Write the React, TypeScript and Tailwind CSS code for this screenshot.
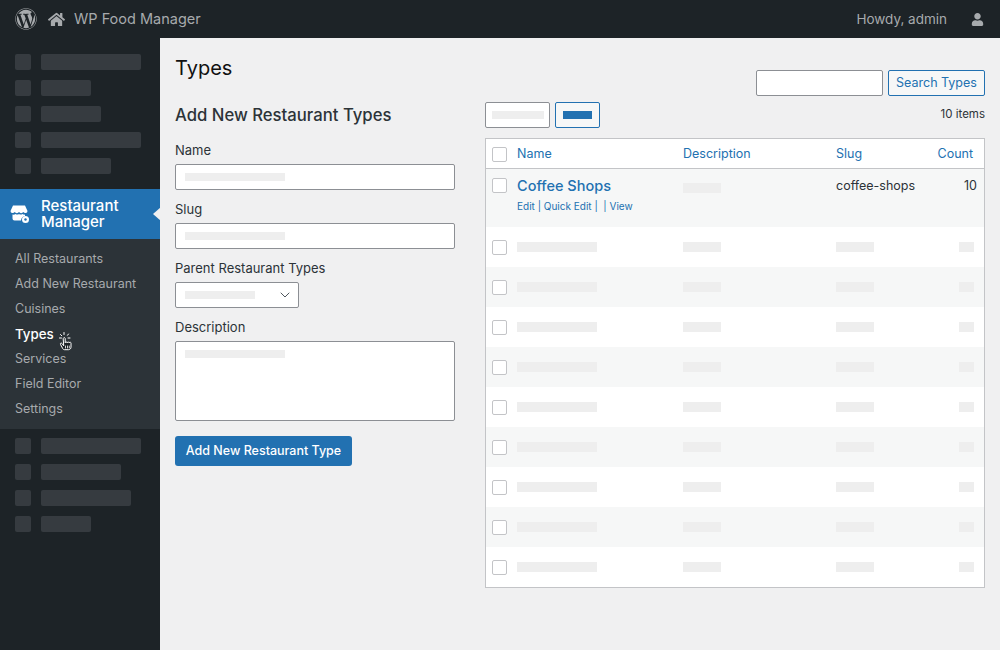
import React from "react";
import { FaWordpress, FaHome, FaUser } from "react-icons/fa";
import { ChevronDown } from "lucide-react";

const topBars = [100, 50, 60, 100, 70];
const bottomBars = [100, 80, 90, 50];
const subItems = ["All Restaurants", "Add New Restaurant", "Cuisines", "Types", "Services", "Field Editor", "Settings"];
const emptyRows = [0, 1, 2, 3, 4, 5, 6, 7, 8];

const SkeletonMenu = ({ bars }: { bars: number[] }) => (
  <div className="flex flex-col gap-[10px] pl-[15px]">
    {bars.map((w, i) => (
      <div key={i} className="flex gap-[10px]">
        <div className="h-4 w-4 rounded-[2px] bg-[#363b40]" />
        <div className="h-4 rounded-[2px] bg-[#363b40]" style={{ width: w }} />
      </div>
    ))}
  </div>
);

const StoreIcon = () => (
  <svg width="20" height="20" viewBox="0 0 20 20" className="shrink-0">
    <path d="M3 1.5h12l2.5 5.5a2 2 0 0 1-2.2 2 2.4 2.4 0 0 1-2-1 2.6 2.6 0 0 1-4.3 0 2.6 2.6 0 0 1-4.300 0 2.4 2.400 0 0 1-2 1A2 2 0 0 1 .5 7z" fill="#fff" />
    <path d="M2.500 10.500c1 .3 2.300.1 3-.5.800.7 2.500.9 3.500 0 1 .9 2.700.7 3.500 0 .6.500 1.500.7 2.500.6v1.400a5 5 0 0 0-4 4.500H4.500a2 2 0 0 1-2-2z" fill="#fff" />
    <circle cx="15.500" cy="15.500" r="3.500" fill="#fff" />
    <circle cx="15.500" cy="15.500" r="1.200" fill="#2271b1" />
  </svg>
);

const ClickCursor = () => (
  <svg width="14" height="20" viewBox="0 0 14 20" className="mt-[12px] shrink-0" fill="none" stroke="#fff" strokeLinecap="round" strokeLinejoin="round">
    <path d="M5 1.500v2M1.500 3.500l1.300 1.300M9.500 3l-1 1.300M.5 7h2M11 7H9" strokeWidth="1" />
    <path d="M4.500 14.500 3 12.500c-.8-1-2-.2-1.500.9l2.300 4.300c.4.700 1 1 1.700 1h4c1.300 0 2.500-1 2.500-2.500v-4c0-1.300-1.800-1.300-1.800-.2 0-1.300-2-1.300-2-.1 0-1.200-2-1.200-2-.1V7.500c0-1.300-2-1.300-2 0z" fill="#1d2327" strokeWidth="1" />
    <path d="M6.500 15v2M8.500 15v2M10.300 15v2" strokeWidth=".8" />
  </svg>
);

const Sidebar = () => (
  <aside className="flex w-[160px] shrink-0 flex-col bg-[#1d2327] pt-4">
    <SkeletonMenu bars={topBars} />
    <div className="relative mt-[15px] flex h-[50px] items-center gap-[11px] bg-[#2271b1] pl-[10px] text-[15px] font-medium leading-[16px] text-white">
      <StoreIcon />
      <span>Restaurant Manager</span>
      <div className="absolute right-[-1px] top-[18px] h-0 w-0 border-y-[7px] border-r-[8px] border-y-transparent border-r-[#f0f0f1]" />
    </div>
    <div className="h-[190px] bg-[#2c3338] pb-[7px] pt-2">
      {subItems.map((item) => (
        <div key={item} className={`flex h-[25px] items-center gap-[5px] pl-[15px] ${item === "Types" ? "text-[13.3px] font-medium text-white" : "text-[12.5px] text-[#a7aaad]"}`}>
          <span>{item}</span>
          {item === "Types" && <ClickCursor />}
        </div>
      ))}
    </div>
    <div className="mt-[9px]">
      <SkeletonMenu bars={bottomBars} />
    </div>
  </aside>
);

const Field = ({ label, children, className = "" }: { label: string; children: React.ReactNode; className?: string }) => (
  <div className={className}>
    <div className="mb-1 h-5 text-[13px] leading-5 text-[#2c3338]">{label}</div>
    {children}
  </div>
);

const InputBox = () => (
  <div className="flex h-[26px] items-center rounded-[2px] border border-[#8c8f94] bg-white pl-[9px]">
    <div className="h-2 w-[100px] bg-[#eeeeee]" />
  </div>
);

const Checkbox = () => <div className="h-[15px] w-[15px] rounded-[2px] border border-[#c3c4c7] bg-white" />;

const RowGrid = "grid grid-cols-[25px_166px_153px_1fr] pl-[6px] pr-[10px]";

const TypesTable = () => (
  <div className="mt-[10px] border border-[#c3c4c7] bg-white">
    <div className={`${RowGrid} h-[30px] items-center border-b border-[#c3c4c7] pt-[1px] text-[12.5px] text-[#2271b1]`}>
      <Checkbox />
      <span>Name</span>
      <span>Description</span>
      <div className="flex justify-between">
        <span>Slug</span>
        <span className="pr-px">Count</span>
      </div>
    </div>
    <div className={`${RowGrid} h-[58px] bg-[#f6f7f7] pt-[9px]`}>
      <Checkbox />
      <div className="-mt-px">
        <div className="text-[14.5px] font-medium leading-[18px] text-[#2271b1]">Coffee Shops</div>
        <div className="mt-[4px] text-[10px] leading-[14px] text-[#2271b1]">Edit | Quick Edit | &nbsp;| View</div>
      </div>
      <div className="mt-[5px] h-[10px] w-[38px] bg-[#eeeeee]" />
      <div className="flex justify-between text-[12.5px] leading-[16px] text-[#2c3338]">
        <span>coffee-shops</span>
        <span className="mr-[-3px]">10</span>
      </div>
    </div>
    {emptyRows.map((r) => (
      <div key={r} className={`${RowGrid} h-10 items-center ${r % 2 === 1 ? "bg-[#f6f7f7]" : "bg-white"}`}>
        <Checkbox />
        <div className="h-[10px] w-[80px] bg-[#eeeeee]" />
        <div className="h-[10px] w-[38px] bg-[#eeeeee]" />
        <div className="flex justify-between">
          <div className="h-[10px] w-[38px] bg-[#eeeeee]" />
          <div className="h-[10px] w-[15px] bg-[#eeeeee]" />
        </div>
      </div>
    ))}
  </div>
);

export default function App() {
  return (
    <div className="flex h-[650px] w-[1000px] flex-col overflow-hidden bg-[#f0f0f1] font-['Inter',sans-serif]">
      <header className="flex h-[38px] shrink-0 items-center bg-[#1d2327] pl-[15px] pr-[16px] text-[#a7aaad]">
        <FaWordpress size={22} />
        <FaHome size={17} className="ml-[11px]" />
        <span className="ml-[9px] text-[14.500px]">WP Food Manager</span>
        <span className="ml-auto text-[13.500px]">Howdy, admin</span>
        <FaUser size={13} className="ml-[24px]" />
      </header>
      <div className="flex flex-1">
        <Sidebar />
        <main className="flex flex-1 gap-[30px] pl-[15px] pr-[15px]">
          <section className="w-[280px] shrink-0 pt-[15px]">
            <h1 className="text-[20px] leading-[30px] text-[#111]">Types</h1>
            <h2 className="mb-[13px] mt-[20px] text-[16.7px] font-medium leading-6 text-[#2c3338]">Add New Restaurant Types</h2>
            <Field label="Name"><InputBox /></Field>
            <Field label="Slug" className="mt-[9px]"><InputBox /></Field>
            <Field label="Parent Restaurant Types" className="mt-[9px]">
              <div className="flex h-[26px] w-[124px] items-center justify-between rounded-[2px] border border-[#8c8f94] bg-white pl-[9px] pr-[5px]">
                <div className="h-2 w-[70px] bg-[#eeeeee]" />
                <ChevronDown size={16} strokeWidth={1.5} className="text-[#50575e]" />
              </div>
            </Field>
            <Field label="Description" className="mt-[9px]">
              <div className="h-20 rounded-[2px] border border-[#8c8f94] bg-white pl-[9px] pt-2">
                <div className="h-2 w-[100px] bg-[#eeeeee]" />
              </div>
            </Field>
            <button className="mt-[15px] h-[30px] w-[177px] rounded-[3px] bg-[#2271b1] text-[12.500px] font-medium text-white">Add New Restaurant Type</button>
          </section>
          <section className="flex-1 pt-[32px]">
            <div className="flex justify-end gap-[5px]">
              <div className="h-[26px] w-[127px] rounded-[2px] border border-[#8c8f94] bg-white" />
              <button className="h-[26px] w-[97px] rounded-[2px] border border-[#2271b1] bg-[#f6f7f7] pt-px text-[12.500px] text-[#2271b1]">Search Types</button>
            </div>
            <div className="mt-[6px] flex items-center gap-[5px]">
              <div className="flex h-[26px] w-[65px] items-center justify-center rounded-[2px] border border-[#8c8f94] bg-white">
                <div className="h-2 w-[52px] bg-[#eeeeee]" />
              </div>
              <div className="flex h-[26px] w-[45px] items-center justify-center rounded-[2px] border border-[#2271b1] bg-[#f6f7f7]">
                <div className="h-2 w-[29px] bg-[#2271b1]" />
              </div>
              <span className="ml-auto text-[11.500px] text-[#2c3338]">10 items</span>
            </div>
            <TypesTable />
          </section>
        </main>
      </div>
    </div>
  );
}
